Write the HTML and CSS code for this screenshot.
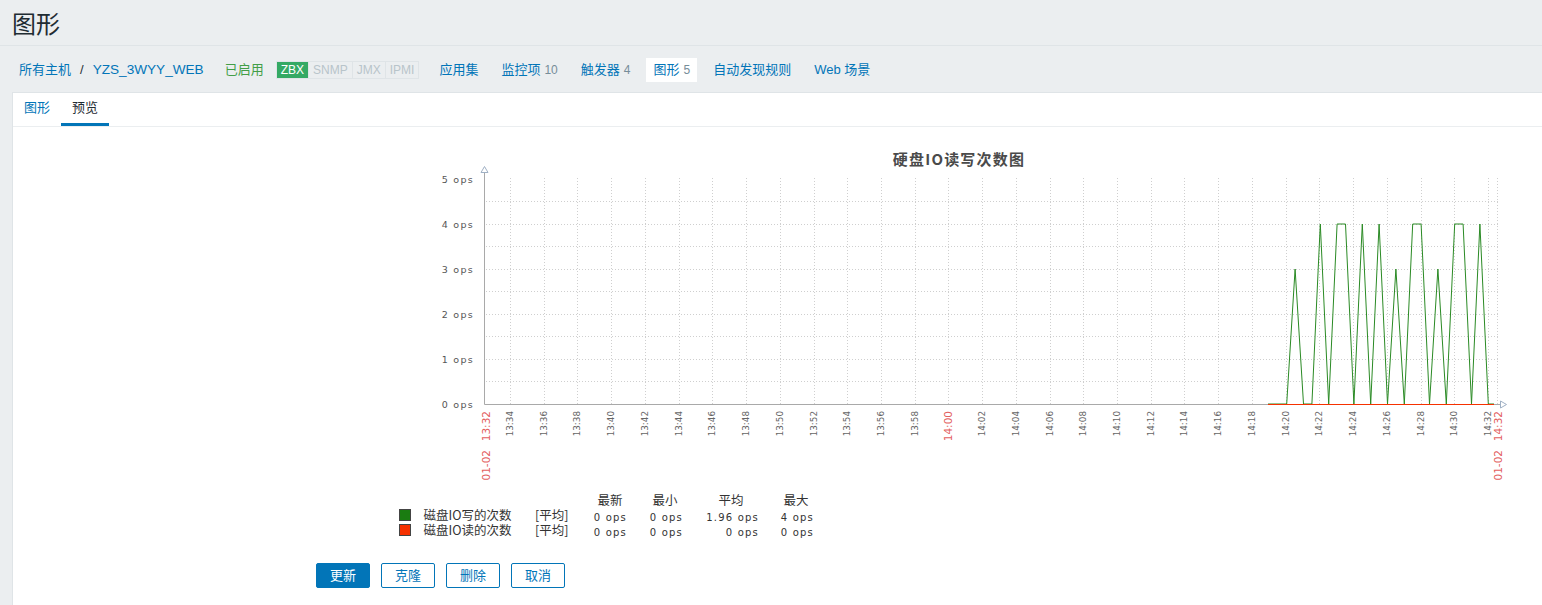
FILE: index.html
```html
<!DOCTYPE html>
<html lang="zh-CN">
<head>
<meta charset="utf-8">
<title>图形</title>
<link rel="stylesheet" href="styles.css">
</head>
<body>
<header class="page-header"><h1 class="page-title">图形</h1></header>
<nav class="host-nav">
  <a class="crumb" href="#">所有主机</a><span class="crumb-sep">/</span><a class="crumb host-name" href="#">YZS_3WYY_WEB</a>
  <span class="status-enabled">已启用</span>
  <span class="status-box"><span class="st st-on">ZBX</span><span class="st">SNMP</span><span class="st">JMX</span><span class="st">IPMI</span></span>
  <ul class="host-links">
    <li><a href="#">应用集</a></li>
    <li><a href="#">监控项</a><sup class="count">10</sup></li>
    <li><a href="#">触发器</a><sup class="count">4</sup></li>
    <li class="selected"><a href="#">图形</a><sup class="count">5</sup></li>
    <li><a href="#">自动发现规则</a></li>
    <li><a href="#">Web 场景</a></li>
  </ul>
</nav>
<main class="content">
  <ul class="tabs">
    <li class="tab"><a href="#">图形</a></li>
    <li class="tab active">预览</li>
  </ul>
  <div class="form">
    <div class="form-label"></div>
    <div class="form-field">
      <svg class="graph" width="1210" height="416" viewBox="316 132 1210 416" xmlns="http://www.w3.org/2000/svg">
        <text class="g-title" x="959" y="165">硬盘IO读写次数图</text>

        <path class="g-grid" d="M510.5 178V404M544.5 178V404M577.5 178V404M611.5 178V404M645.5 178V404M679.5 178V404M712.5 178V404M746.5 178V404M780.5 178V404M814.5 178V404M847.5 178V404M881.5 178V404M915.5 178V404M948.5 178V404M982.5 178V404M1016.5 178V404M1050.5 178V404M1083.5 178V404M1117.5 178V404M1151.5 178V404M1184.5 178V404M1218.5 178V404M1252.5 178V404M1286.5 178V404M1319.5 178V404M1353.5 178V404M1387.5 178V404M1421.5 178V404M1454.5 178V404M1488.5 178V404M1497.5 178V404"/>
        <path class="g-grid" d="M486 201.5H1498M486 224.5H1498M486 246.5H1498M486 269.5H1498M486 291.5H1498M486 314.5H1498M486 336.5H1498M486 359.5H1498M486 381.5H1498"/>

        <path class="g-axis" d="M484.5 172V404.5H1501"/>
        <path class="g-arrow" d="M484.5 166.5L488 172.5H481Z"/>
        <path class="g-arrow" d="M1506.5 404.5L1500.5 401V408Z"/>

        <text class="g-ylab" x="474" y="182.5">5 ops</text>
        <text class="g-ylab" x="474" y="227.5">4 ops</text>
        <text class="g-ylab" x="474" y="272.5">3 ops</text>
        <text class="g-ylab" x="474" y="317.5">2 ops</text>
        <text class="g-ylab" x="474" y="362.5">1 ops</text>
        <text class="g-ylab" x="474" y="407.5">0 ops</text>

        <text class="g-xlab red" transform="translate(489.5 411) rotate(-90)">13:32</text>
        <text class="g-xlab red" transform="translate(489.5 450) rotate(-90)">01-02</text>
        <text class="g-xlab" transform="translate(513 411) rotate(-90)">13:34</text>
        <text class="g-xlab" transform="translate(547 411) rotate(-90)">13:36</text>
        <text class="g-xlab" transform="translate(580 411) rotate(-90)">13:38</text>
        <text class="g-xlab" transform="translate(614 411) rotate(-90)">13:40</text>
        <text class="g-xlab" transform="translate(648 411) rotate(-90)">13:42</text>
        <text class="g-xlab" transform="translate(682 411) rotate(-90)">13:44</text>
        <text class="g-xlab" transform="translate(715 411) rotate(-90)">13:46</text>
        <text class="g-xlab" transform="translate(749 411) rotate(-90)">13:48</text>
        <text class="g-xlab" transform="translate(783 411) rotate(-90)">13:50</text>
        <text class="g-xlab" transform="translate(817 411) rotate(-90)">13:52</text>
        <text class="g-xlab" transform="translate(850 411) rotate(-90)">13:54</text>
        <text class="g-xlab" transform="translate(884 411) rotate(-90)">13:56</text>
        <text class="g-xlab" transform="translate(918 411) rotate(-90)">13:58</text>
        <text class="g-xlab red" transform="translate(952 411) rotate(-90)">14:00</text>
        <text class="g-xlab" transform="translate(985 411) rotate(-90)">14:02</text>
        <text class="g-xlab" transform="translate(1019 411) rotate(-90)">14:04</text>
        <text class="g-xlab" transform="translate(1053 411) rotate(-90)">14:06</text>
        <text class="g-xlab" transform="translate(1086 411) rotate(-90)">14:08</text>
        <text class="g-xlab" transform="translate(1120 411) rotate(-90)">14:10</text>
        <text class="g-xlab" transform="translate(1154 411) rotate(-90)">14:12</text>
        <text class="g-xlab" transform="translate(1187 411) rotate(-90)">14:14</text>
        <text class="g-xlab" transform="translate(1221 411) rotate(-90)">14:16</text>
        <text class="g-xlab" transform="translate(1255 411) rotate(-90)">14:18</text>
        <text class="g-xlab" transform="translate(1289 411) rotate(-90)">14:20</text>
        <text class="g-xlab" transform="translate(1322 411) rotate(-90)">14:22</text>
        <text class="g-xlab" transform="translate(1356 411) rotate(-90)">14:24</text>
        <text class="g-xlab" transform="translate(1390 411) rotate(-90)">14:26</text>
        <text class="g-xlab" transform="translate(1424 411) rotate(-90)">14:28</text>
        <text class="g-xlab" transform="translate(1457 411) rotate(-90)">14:30</text>
        <text class="g-xlab" transform="translate(1491 411) rotate(-90)">14:32</text>
        <text class="g-xlab red" transform="translate(1502 411) rotate(-90)">14:32</text>
        <text class="g-xlab red" transform="translate(1502 450) rotate(-90)">01-02</text>

        <path class="g-line green" d="M1268 404L1286.7 404L1295.1 269L1303.5 404L1311.9 404L1320.3 224L1328.7 404L1337.1 224L1345.5 224L1353.9 404L1362.3 224L1370.7 404L1379.1 224L1387.5 404L1395.9 269L1404.3 404L1412.7 224L1421.1 224L1429.5 404L1437.9 269L1446.3 404L1454.7 224L1463.1 224L1471.5 404L1479.9 224L1488.3 404L1494 404"/>
        <path class="g-line red" d="M1268 404.5H1494"/>

        <text class="g-leg mid" x="610" y="505">最新</text>
        <text class="g-leg mid" x="665" y="505">最小</text>
        <text class="g-leg mid" x="731" y="505">平均</text>
        <text class="g-leg mid" x="796" y="505">最大</text>

        <rect class="g-box green" x="399.5" y="509.5" width="11" height="11"/>
        <rect class="g-box red" x="399.5" y="524.5" width="11" height="11"/>
        <text class="g-leg"><tspan x="423.5" y="520">磁盘IO写的次数</tspan><tspan x="423.5" y="535">磁盘IO读的次数</tspan></text>
        <text class="g-leg"><tspan x="535" y="520">[平均]</tspan><tspan x="535" y="535">[平均]</tspan></text>

        <text class="g-num" x="627" y="520.5">0 ops</text>
        <text class="g-num" x="683" y="520.5">0 ops</text>
        <text class="g-num" x="759" y="520.5">1.96 ops</text>
        <text class="g-num" x="814" y="520.5">4 ops</text>

        <text class="g-num" x="627" y="535.5">0 ops</text>
        <text class="g-num" x="683" y="535.5">0 ops</text>
        <text class="g-num" x="759" y="535.5">0 ops</text>
        <text class="g-num" x="814" y="535.5">0 ops</text>
      </svg>
      <div class="buttons">
        <button class="btn primary" type="button">更新</button>
        <button class="btn" type="button">克隆</button>
        <button class="btn" type="button">删除</button>
        <button class="btn" type="button">取消</button>
      </div>
    </div>
  </div>
</main>
</body>
</html>
```

FILE: styles.css
```css
* { box-sizing: border-box; }
html, body { margin: 0; padding: 0; }
body {
  background: #ebeef0;
  font-family: "Liberation Sans", "Noto Sans CJK SC", sans-serif;
  font-size: 13px;
  color: #1f2c33;
  width: 1542px;
  height: 605px;
  overflow: hidden;
}
a { color: #0275b8; text-decoration: none; }

.page-header {
  height: 46px;
  border-bottom: 1px solid #dfe4e7;
  display: flex;
  align-items: center;
  padding: 4px 0 0 12px;
}
.page-title {
  margin: 0;
  font-size: 24px;
  font-weight: normal;
  line-height: 30px;
  color: #1f2c33;
}

.host-nav {
  height: 46px;
  display: flex;
  align-items: center;
  padding: 1px 0 0 19px;
  line-height: 18px;
}
.crumb-sep { margin: 0 9px; color: #1f2c33; }
.host-name { font-size: 13.6px; }
.status-enabled { color: #429e47; margin-left: 21px; }
.status-box {
  display: flex;
  margin-left: 12px;
  margin-right: 13px;
  border: 1px solid #dfe4e7;
}
.st {
  padding: 0 4px;
  line-height: 16px;
  font-size: 12px;
  color: #b8c4ca;
  border-left: 1px solid #dfe4e7;
}
.st:first-child { border-left: 0; }
.st-on { background: #34a964; color: #fff; }

.host-links {
  display: flex;
  align-items: center;
  gap: 9px;
  list-style: none;
  margin: 0;
  padding: 0;
}
.host-links li {
  padding: 0 7px;
  line-height: 23px;
  white-space: nowrap;
}
.host-links li.selected { background: #fff; }
.count {
  font-size: 12px;
  color: #768d99;
  vertical-align: baseline;
  margin-left: 4px;
}

.content {
  margin-left: 12px;
  background: #fff;
  border-top: 1px solid #dfe4e7;
  border-left: 1px solid #dfe4e7;
  height: 513px;
}
.tabs {
  display: flex;
  list-style: none;
  margin: 0;
  padding: 0;
  border-bottom: 1px solid #ebeef0;
}
.tab {
  padding: 0 11px;
  line-height: 30px;
  border-bottom: 3px solid transparent;
  color: #1f2c33;
}
.tab.active { border-bottom-color: #0275b8; }

.form {
  display: grid;
  grid-template-columns: 293px 1fr;
  padding: 5px 0 0 10px;
}
.graph { display: block; }
.buttons {
  display: flex;
  gap: 11px;
  margin-top: 15px;
}
.btn {
  height: 25px;
  padding: 0 13px;
  font-family: "Liberation Sans", "Noto Sans CJK SC", sans-serif;
  font-size: 13px;
  line-height: 23px;
  border: 1px solid #0275b8;
  border-radius: 2px;
  background: #fff;
  color: #0275b8;
}
.btn.primary { background: #0275b8; color: #fff; }

/* graph */
.g-title {
  font-family: "Noto Sans CJK SC", sans-serif;
  font-size: 15px;
  font-weight: bold;
  fill: #4a4a4a;
  letter-spacing: 1.2px;
  text-anchor: middle;
}
.g-grid { fill: none; stroke: #cfcfcf; stroke-width: 1; stroke-dasharray: 1 2; }
.g-axis { fill: none; stroke: #a9a9a9; stroke-width: 1; }
.g-arrow { fill: #fff; stroke: #9fb0c4; stroke-width: 1; }
.g-ylab {
  font-family: "DejaVu Sans", sans-serif;
  font-size: 9.5px;
  letter-spacing: 1.3px;
  fill: #555;
  text-anchor: end;
}
.g-xlab {
  font-family: "DejaVu Sans", sans-serif;
  font-size: 8.8px;
  fill: #666;
  text-anchor: end;
}
.g-xlab.red { fill: #e36060; font-size: 10.5px; }
.g-line { fill: none; stroke-width: 1; }
.g-line.green { stroke: #2a8a24; }
.g-line.red { stroke: #f63100; }
.g-box { stroke: #444; stroke-width: 1; }
.g-box.green { fill: #1a7c11; }
.g-box.red { fill: #f63100; }
.g-leg {
  font-family: "Noto Sans CJK SC", sans-serif;
  font-size: 12.5px;
  fill: #333;
}
.g-leg.mid { text-anchor: middle; }
.g-num {
  font-family: "DejaVu Sans", sans-serif;
  font-size: 10px;
  letter-spacing: 1.2px;
  fill: #333;
  text-anchor: end;
}
```
